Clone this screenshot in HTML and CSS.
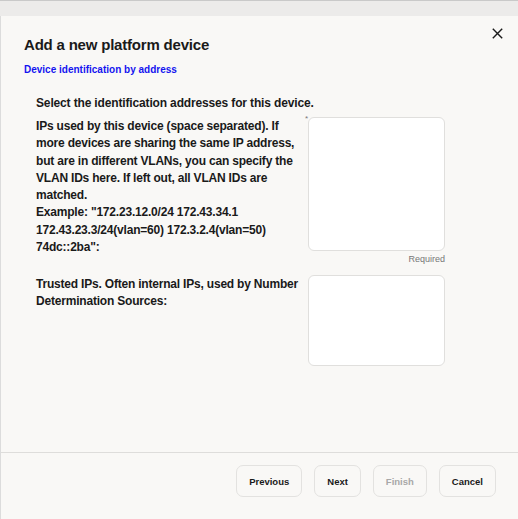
FILE: index.html
```html
<!DOCTYPE html>
<html>
<head>
<meta charset="utf-8">
<link rel="stylesheet" href="styles.css">
</head>
<body>
<div class="backdrop"></div>
<div class="dialog">
  <div class="header">
    <h1 class="title">Add a new platform device</h1>
    <button class="close" aria-label="Close">
      <svg width="11" height="11" viewBox="0 0 11 11"><path d="M0.8 0.8 L10.2 10.2 M10.2 0.8 L0.8 10.2" stroke="#1a1a1a" stroke-width="1.4" fill="none"/></svg>
    </button>
  </div>
  <div class="step">Device identification by address</div>
  <div class="content">
    <p class="intro">Select the identification addresses for this device.</p>
    <div class="row">
      <label class="label">IPs used by this device (space separated). If more devices are sharing the same IP address, but are in different VLANs, you can specify the VLAN IDs here. If left out, all VLAN IDs are matched.<br>Example: "172.23.12.0/24 172.43.34.1 172.43.23.3/24(vlan=60) 172.3.2.4(vlan=50) 74dc::2ba":</label>
      <div class="field">
        <span class="star">*</span>
        <textarea class="input tall"></textarea>
        <div class="hint">Required</div>
      </div>
    </div>
    <div class="row second">
      <label class="label">Trusted IPs. Often internal IPs, used by Number Determination Sources:</label>
      <div class="field">
        <textarea class="input short"></textarea>
      </div>
    </div>
  </div>
  <div class="footer">
    <button class="btn">Previous</button>
    <button class="btn">Next</button>
    <button class="btn disabled">Finish</button>
    <button class="btn">Cancel</button>
  </div>
</div>
</body>
</html>
```
FILE: styles.css
```css
html, body {
  margin: 0;
  padding: 0;
  height: 100%;
}
body {
  font-family: "Liberation Sans", Arial, sans-serif;
  color: #1a1a1a;
  background: #f9f8f6;
  display: flex;
  flex-direction: column;
}
.backdrop {
  height: 15px;
  flex: none;
  background: #ecebea;
  border-top: 1px solid #c9c9c9;
}
.dialog {
  flex: 1;
  background: #f9f8f6;
  border-left: 1px solid #dcdcdc;
  display: flex;
  flex-direction: column;
}
.header {
  display: flex;
  justify-content: space-between;
  align-items: flex-start;
  padding: 12px 15px 0 23px;
}
.title {
  margin: 7px 0 0;
  font-size: 15px;
  letter-spacing: -0.2px;
  font-weight: bold;
  line-height: 20px;
}
.close {
  border: none;
  background: none;
  padding: 0;
  width: 11px;
  height: 11px;
  display: flex;
}
.step {
  margin: 8px 0 0 23px;
  font-size: 10px;
  font-weight: bold;
  color: #1414f0;
  line-height: 14px;
}
.content {
  flex: 1;
  padding: 0 0 0 35px;
}
.intro {
  margin: 19px 0 0;
  font-size: 12px;
  letter-spacing: -0.15px;
  font-weight: bold;
  line-height: 15px;
}
.row {
  display: grid;
  grid-template-columns: 268px 137px;
  column-gap: 4px;
  margin-top: 6px;
}
.row.second {
  margin-top: 10px;
}
.label {
  font-size: 12px;
  letter-spacing: -0.2px;
  font-weight: bold;
  line-height: 17.3px;
  padding-top: 1px;
}
.field {
  position: relative;
}
.star {
  position: absolute;
  left: -3px;
  top: -3px;
  font-size: 8px;
  color: #777;
}
.input {
  display: block;
  box-sizing: border-box;
  width: 137px;
  margin: 0;
  border: 1px solid #e0dfdd;
  border-radius: 6px;
  background: #fff;
  resize: none;
}
.tall {
  height: 134px;
}
.short {
  height: 91px;
}
.hint {
  text-align: right;
  font-size: 9px;
  color: #777;
  margin-top: 2px;
  line-height: 12px;
}
.footer {
  border-top: 1px solid #dedddb;
  display: flex;
  justify-content: flex-end;
  gap: 12px;
  padding: 12px 22px 22px 0;
}
.btn {
  font-family: "Liberation Sans", Arial, sans-serif;
  font-size: 9.5px;
  font-weight: bold;
  color: #1a1a1a;
  background: #f9f8f6;
  border: 1px solid #e3e2e0;
  border-radius: 7px;
  height: 32px;
  padding: 0 12px;
}
.btn.disabled {
  color: #a8a8a8;
}
```
